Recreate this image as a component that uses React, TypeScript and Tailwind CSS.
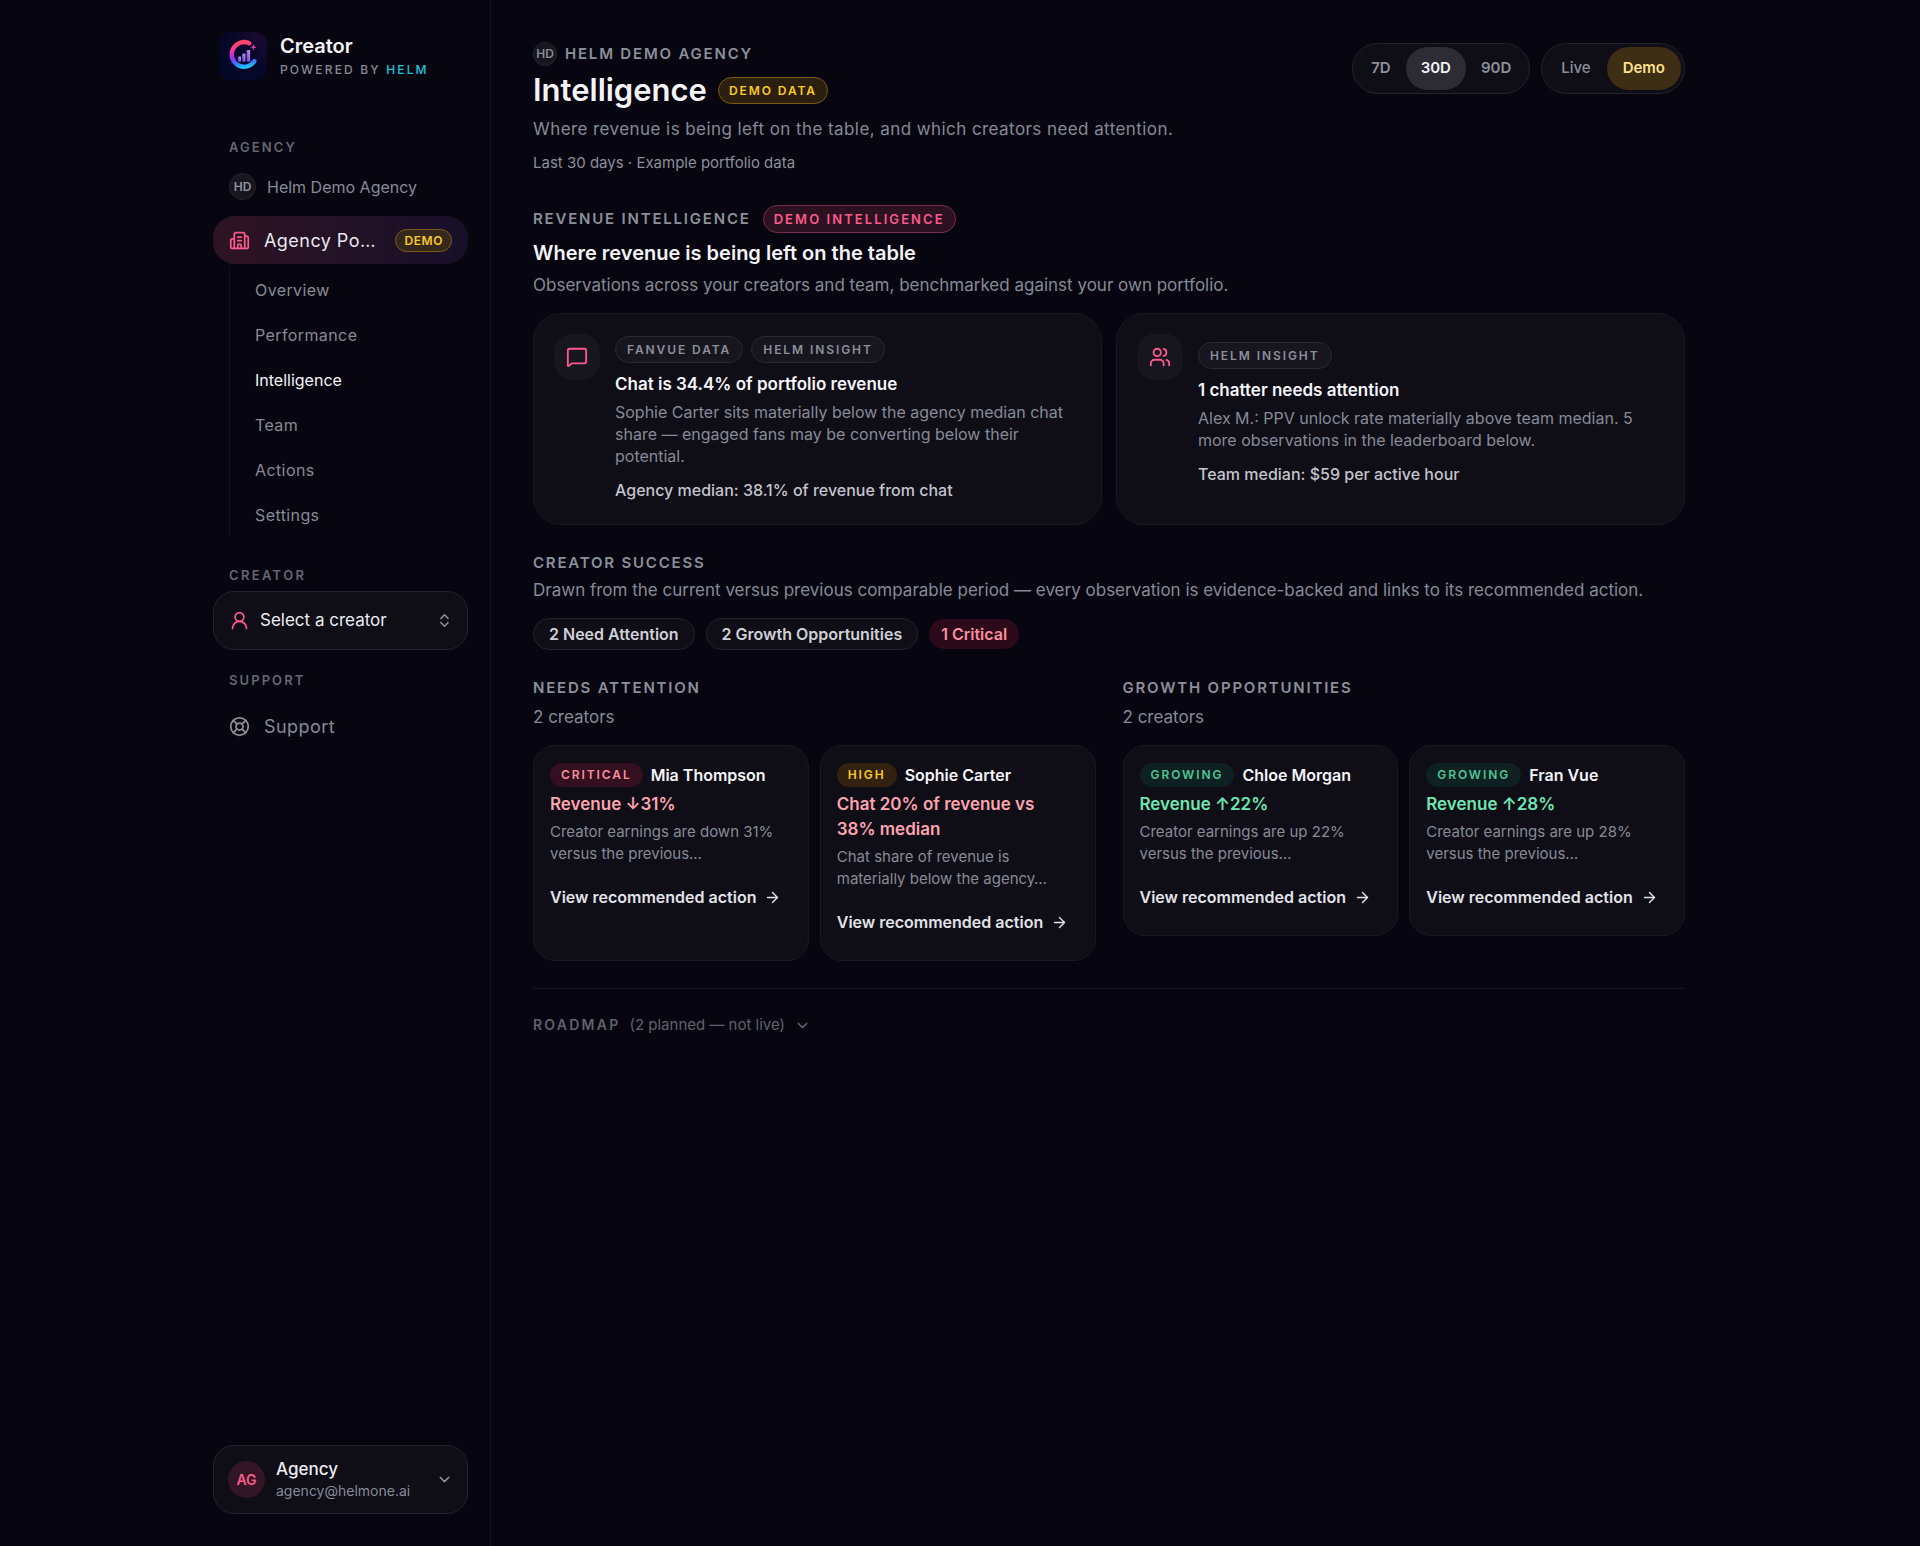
import type { ReactNode } from 'react';
import {
  ArrowRight,
  Building2,
  ChevronDown,
  ChevronsUpDown,
  LifeBuoy,
  MessageSquare,
  UserRound,
  Users,
  type LucideIcon,
} from 'lucide-react';

const NAV_ITEMS = ['Overview', 'Performance', 'Intelligence', 'Team', 'Actions', 'Settings'];

const PERIODS = ['7D', '30D', '90D'];

type Insight = {
  icon: LucideIcon;
  tags: string[];
  title: string;
  text: string;
  benchmark: string;
  bodyClass: string;
};

const INSIGHTS: Insight[] = [
  {
    icon: MessageSquare,
    tags: ['Fanvue data', 'Helm insight'],
    title: 'Chat is 34.4% of portfolio revenue',
    text: 'Sophie Carter sits materially below the agency median chat share — engaged fans may be converting below their potential.',
    benchmark: 'Agency median: 38.1% of revenue from chat',
    bodyClass: 'pt-0.5',
  },
  {
    icon: Users,
    tags: ['Helm insight'],
    title: '1 chatter needs attention',
    text: 'Alex M.: PPV unlock rate materially above team median. 5 more observations in the leaderboard below.',
    benchmark: 'Team median: $59 per active hour',
    bodyClass: 'pt-2',
  },
];

type Creator = {
  level: 'Critical' | 'High' | 'Growing';
  name: string;
  metric: string;
  text: string;
};

const LEVEL_STYLES = {
  Critical: 'bg-[#330f1f] text-[#fb8f9d]',
  High: 'bg-[#332211] text-[#fbc924]',
  Growing: 'bg-[#0e2022] text-[#4cc795]',
};

const GROUPS: { title: string; count: string; creators: Creator[] }[] = [
  {
    title: 'Needs attention',
    count: '2 creators',
    creators: [
      {
        level: 'Critical',
        name: 'Mia Thompson',
        metric: 'Revenue ↓31%',
        text: 'Creator earnings are down 31% versus the previous…',
      },
      {
        level: 'High',
        name: 'Sophie Carter',
        metric: 'Chat 20% of revenue vs 38% median',
        text: 'Chat share of revenue is materially below the agency…',
      },
    ],
  },
  {
    title: 'Growth opportunities',
    count: '2 creators',
    creators: [
      {
        level: 'Growing',
        name: 'Chloe Morgan',
        metric: 'Revenue ↑22%',
        text: 'Creator earnings are up 22% versus the previous…',
      },
      {
        level: 'Growing',
        name: 'Fran Vue',
        metric: 'Revenue ↑28%',
        text: 'Creator earnings are up 28% versus the previous…',
      },
    ],
  },
];

const Logo = () => (
  <svg viewBox="0 0 48 48" className="size-12 shrink-0" aria-hidden="true">
    <defs>
      <linearGradient id="tile" x1="0" y1="1" x2="1" y2="0">
        <stop offset="0" stopColor="#020826" />
        <stop offset="0.55" stopColor="#060728" />
        <stop offset="1" stopColor="#210a36" />
      </linearGradient>
      <linearGradient id="ring" x1="0.6" y1="0" x2="0.75" y2="1">
        <stop offset="0" stopColor="#ff4468" />
        <stop offset="0.25" stopColor="#fb35a8" />
        <stop offset="0.55" stopColor="#a52cf5" />
        <stop offset="0.78" stopColor="#3b6bff" />
        <stop offset="1" stopColor="#1fc4fb" />
      </linearGradient>
      <linearGradient id="bars" x1="1" y1="0" x2="0" y2="1">
        <stop offset="0" stopColor="#c9a0fb" />
        <stop offset="1" stopColor="#5b35c9" />
      </linearGradient>
    </defs>
    <rect width="48" height="48" rx="13" fill="url(#tile)" />
    <path
      d="M30.2 11.2A12.3 12.3 0 1 0 35.4 29"
      fill="none"
      stroke="url(#ring)"
      strokeWidth="4.4"
      strokeLinecap="round"
    />
    <rect x="19" y="24.5" width="3" height="5.3" rx="0.8" fill="url(#bars)" />
    <rect x="23.2" y="21.5" width="3.2" height="8.3" rx="0.8" fill="url(#bars)" />
    <rect x="27.6" y="18" width="3.5" height="11.8" rx="0.8" fill="url(#bars)" />
    <path d="M34.5 12l.8 2.5 2.5.8-2.5.8-.8 2.5-.8-2.5-2.5-.8 2.5-.8z" fill="#f03fa8" />
  </svg>
);

const Eyebrow = ({ children }: { children: ReactNode }) => (
  <h2 className="text-[15px] leading-5 font-semibold tracking-[0.12em] text-[#8b909b] uppercase">
    {children}
  </h2>
);

const NavLabel = ({ children }: { children: ReactNode }) => (
  <p className="px-4 text-[13px] leading-5 font-semibold tracking-[0.16em] text-[#646771] uppercase">
    {children}
  </p>
);

const Sidebar = () => (
  <aside className="flex w-[299px] shrink-0 flex-col border-r border-[#12101a] py-8 pr-[22px] pl-[21px]">
    <a href="#home" className="flex items-center gap-[13px] pl-1.5">
      <Logo />
      <span>
        <span className="block text-[20px] leading-7 font-semibold text-[#f4f4f8]">Creator</span>
        <span className="block text-[12px] leading-5 font-medium tracking-[0.18em] text-[#868b96] uppercase">
          Powered by <span className="text-[#22c3dd]">Helm</span>
        </span>
      </span>
    </a>

    <div className="mt-[57px]">
      <NavLabel>Agency</NavLabel>
    </div>
    <div className="mt-4 flex items-center gap-[11px] px-4">
      <span className="flex size-[27px] items-center justify-center rounded-full border border-[#26242d] bg-[#17151e] text-[12px] font-semibold text-[#9295a0]">
        HD
      </span>
      <span className="text-[16px] leading-6 text-[#868b96]">Helm Demo Agency</span>
    </div>

    <a
      href="#portfolio"
      className="mt-4 flex h-12 items-center gap-3.5 rounded-[22px] bg-linear-to-r from-[#2f1322] to-[#170f29] px-4"
    >
      <Building2 className="size-[21px] shrink-0 text-[#fb5a8c]" />
      <span className="flex-1 text-[18px] tracking-wide whitespace-nowrap text-[#e7e7ee]">
        Agency Po…
      </span>
      <span className="rounded-full border border-[#7d5a14] bg-[#37281d] px-2 text-[12px] leading-[21px] font-semibold tracking-wider text-[#fbca24] uppercase">
        Demo
      </span>
    </a>
    <nav className="mt-1 ml-4 flex flex-col gap-0.5 border-l border-[#12101a] pl-[25px]">
      {NAV_ITEMS.map((item) => (
        <a
          key={item}
          href={`#${item.toLowerCase()}`}
          className={
            item === 'Intelligence'
              ? 'flex h-[43px] items-center text-[16px] text-[#f4f4f8]'
              : 'flex h-[43px] items-center text-[16px] tracking-wide text-[#868b96]'
          }
        >
          {item}
        </a>
      ))}
    </nav>

    <label
      htmlFor="creator"
      className="mt-[29px] px-4 text-[13px] leading-5 font-semibold tracking-[0.18em] text-[#646771] uppercase"
    >
      Creator
    </label>
    <div className="relative mt-1.5 flex items-center">
      <UserRound className="pointer-events-none absolute left-4 size-[21px] text-[#fb5a8c]" />
      <select
        id="creator"
        className="h-[59px] w-full appearance-none rounded-[21px] border border-[#24222b] bg-[#0f0d16] pl-[46px] text-[17px] text-[#ecedf2]"
      >
        <option>Select a creator</option>
      </select>
      <ChevronsUpDown className="pointer-events-none absolute right-[15px] size-[17px] text-[#8b909b]" />
    </div>

    <div className="mt-5">
      <NavLabel>Support</NavLabel>
    </div>
    <a href="#support" className="mt-3 flex h-12 items-center gap-3.5 px-4">
      <LifeBuoy className="size-[21px] text-[#8b909b]" />
      <span className="text-[18px] tracking-wide text-[#868b96]">Support</span>
    </a>

    <button
      type="button"
      className="mt-auto flex h-[69px] items-center gap-[11px] rounded-[21px] border border-[#24222b] bg-[#0f0d16] px-3.5 text-left"
    >
      <span className="flex size-[37px] shrink-0 items-center justify-center rounded-full bg-[#331625] text-[14px] font-semibold text-[#fb5a8c]">
        AG
      </span>
      <span className="flex-1">
        <span className="block text-[17px] leading-[22px] font-medium text-[#ecedf2]">Agency</span>
        <span className="block text-[14px] leading-[22px] text-[#868b96]">agency@helmone.ai</span>
      </span>
      <ChevronDown className="size-[17px] text-[#8b909b]" />
    </button>
  </aside>
);

const InsightCard = ({ icon: Icon, tags, title, text, benchmark, bodyClass }: Insight) => (
  <article className="flex gap-[15px] rounded-[28px] border border-[#1a1821] bg-[#0f0d16] px-5 pt-5 pb-[23px]">
    <span className="flex size-[46px] shrink-0 items-center justify-center rounded-[18px] bg-[#17151e]">
      <Icon className="size-[22px] text-[#fb5a8c]" />
    </span>
    <div className={bodyClass}>
      <div className="flex gap-2">
        {tags.map((tag) => (
          <span
            key={tag}
            className="rounded-full border border-[#2b2931] bg-[#17151e] px-[11px] text-[12px] leading-[25px] font-semibold tracking-[0.16em] text-[#8b909b] uppercase"
          >
            {tag}
          </span>
        ))}
      </div>
      <h3 className="mt-[9px] text-[17px] leading-6 font-semibold text-[#f4f4f8]">{title}</h3>
      <p className="mt-[5px] text-[16px] leading-[22px] text-[#868b96]">{text}</p>
      <p className="mt-3 text-[16px] leading-[22px] font-medium text-[#c3c4cc]">{benchmark}</p>
    </div>
  </article>
);

const CreatorCard = ({ level, name, metric, text }: Creator) => (
  <article className="rounded-[22px] border border-[#1a1821] bg-[#0f0d16] p-4">
    <div className="flex items-center gap-2">
      <span
        className={`rounded-full px-[11px] text-[12px] leading-6 font-semibold tracking-[0.16em] uppercase ${LEVEL_STYLES[level]}`}
      >
        {level}
      </span>
      <h4 className="text-[16px] leading-[26px] font-semibold text-[#f4f4f8]">{name}</h4>
    </div>
    <p
      className={`mt-1 pr-4 text-[17px] leading-[25px] font-semibold ${
        level === 'Growing' ? 'text-[#6ee7b0]' : 'text-[#fda4af]'
      }`}
    >
      {metric}
    </p>
    <p className="mt-1 text-[15px] leading-[22px] text-[#868b96]">{text}</p>
    <a
      href="#actions"
      className="mt-2.5 flex h-11 items-center gap-2 text-[16px] font-semibold text-[#e2e3e9]"
    >
      View recommended action
      <ArrowRight className="size-[17px]" />
    </a>
  </article>
);

const PageHeader = () => (
  <header className="flex items-start justify-between">
    <div>
      <div className="flex items-center gap-2">
        <span className="flex size-6 items-center justify-center rounded-full border border-[#26242d] bg-[#17151e] text-[12px] font-semibold text-[#868b96]">
          HD
        </span>
        <span className="text-[15px] leading-6 font-semibold tracking-[0.12em] text-[#8b909b] uppercase">
          Helm Demo Agency
        </span>
      </div>
      <div className="mt-1.5 flex items-center gap-[11px]">
        <h1 className="text-[31px] leading-9 font-semibold text-[#f4f4f8]">Intelligence</h1>
        <span className="rounded-full border border-[#7d5a0c] bg-[#2b1f10] px-2.5 text-[12px] leading-[25px] font-semibold tracking-[0.16em] text-[#fbca24] uppercase">
          Demo data
        </span>
      </div>
      <p className="mt-2 text-[17px] leading-[26px] tracking-wide text-[#868b96]">
        Where revenue is being left on the table, and which creators need attention.
      </p>
      <p className="mt-[11px] text-[15px] leading-5 text-[#8b909b]">
        Last 30 days · Example portfolio data
      </p>
    </div>

    <div className="mt-px flex gap-[11px]">
      <div className="flex rounded-full border border-[#24222b] bg-[#0f0d16] p-[3px]">
        {PERIODS.map((period) => (
          <button
            key={period}
            type="button"
            className={`h-[43px] rounded-full px-[15px] text-[15px] font-semibold ${
              period === '30D' ? 'bg-[#2d2b34] text-[#f4f4f8]' : 'text-[#8b909b]'
            }`}
          >
            {period}
          </button>
        ))}
      </div>
      <div className="flex rounded-full border border-[#24222b] bg-[#0f0d16] p-[3px]">
        <button
          type="button"
          className="h-[43px] rounded-full px-4 text-[15px] font-medium text-[#8b909b]"
        >
          Live
        </button>
        <button
          type="button"
          className="h-[43px] rounded-full bg-[#3e2e14] px-4 text-[15px] font-semibold text-[#fde08a]"
        >
          Demo
        </button>
      </div>
    </div>
  </header>
);

const App = () => {
  return (
    <div className="min-h-screen bg-[#07050f] font-['Inter',sans-serif] antialiased">
      <div className="mx-auto flex min-h-screen max-w-[1536px]">
        <Sidebar />

        <main className="min-w-0 flex-1 py-[42px] pr-[43px] pl-[42px]">
          <PageHeader />

          <section className="mt-8">
            <div className="flex items-center gap-3">
              <Eyebrow>Revenue intelligence</Eyebrow>
              <span className="rounded-full border border-[#7a2b4b] bg-[#2c1121] px-2.5 text-[13px] leading-[26px] font-semibold tracking-[0.16em] text-[#fb5a8c] uppercase">
                Demo intelligence
              </span>
            </div>
            <h2 className="mt-1.5 text-[20px] leading-7 font-semibold text-[#f4f4f8]">
              Where revenue is being left on the table
            </h2>
            <p className="mt-1.5 text-[17px] leading-6 text-[#868b96]">
              Observations across your creators and team, benchmarked against your own portfolio.
            </p>
            <div className="mt-4 grid grid-cols-2 gap-3.5">
              {INSIGHTS.map((insight) => (
                <InsightCard key={insight.title} {...insight} />
              ))}
            </div>
          </section>

          <section className="mt-7">
            <Eyebrow>Creator success</Eyebrow>
            <p className="mt-[5px] text-[17px] leading-6 text-[#868b96]">
              Drawn from the current versus previous comparable period — every observation is
              evidence-backed and links to its recommended action.
            </p>
            <div className="mt-4 flex items-center gap-[11px] text-[16px] leading-[30px] font-semibold">
              <span className="rounded-full border border-[#24222b] bg-[#0f0d16] px-[15px] text-[#cfd0d7]">
                2 Need Attention
              </span>
              <span className="rounded-full border border-[#24222b] bg-[#0f0d16] px-[15px] text-[#cfd0d7]">
                2 Growth Opportunities
              </span>
              <span className="rounded-full bg-[#2c0a1a] px-3 text-[#fb8f9d]">1 Critical</span>
            </div>

            <div className="mt-7 grid grid-cols-2 items-start gap-[27px]">
              {GROUPS.map((group) => (
                <section key={group.title}>
                  <Eyebrow>{group.title}</Eyebrow>
                  <p className="mt-[7px] text-[17px] leading-6 text-[#868b96]">{group.count}</p>
                  <div className="mt-4 grid grid-cols-2 gap-[11px]">
                    {group.creators.map((creator) => (
                      <CreatorCard key={creator.name} {...creator} />
                    ))}
                  </div>
                </section>
              ))}
            </div>
          </section>

          <div className="mt-[27px] border-t border-[#15131c] pt-6">
            <button type="button" className="flex items-center gap-[9px] text-[#5f626c]">
              <span className="text-[14px] leading-6 font-semibold tracking-[0.16em] uppercase">
                Roadmap
              </span>
              <span className="text-[15px] leading-6">(2 planned — not live)</span>
              <ChevronDown className="size-[17px]" />
            </button>
          </div>
        </main>
      </div>
    </div>
  );
};

export default App;
